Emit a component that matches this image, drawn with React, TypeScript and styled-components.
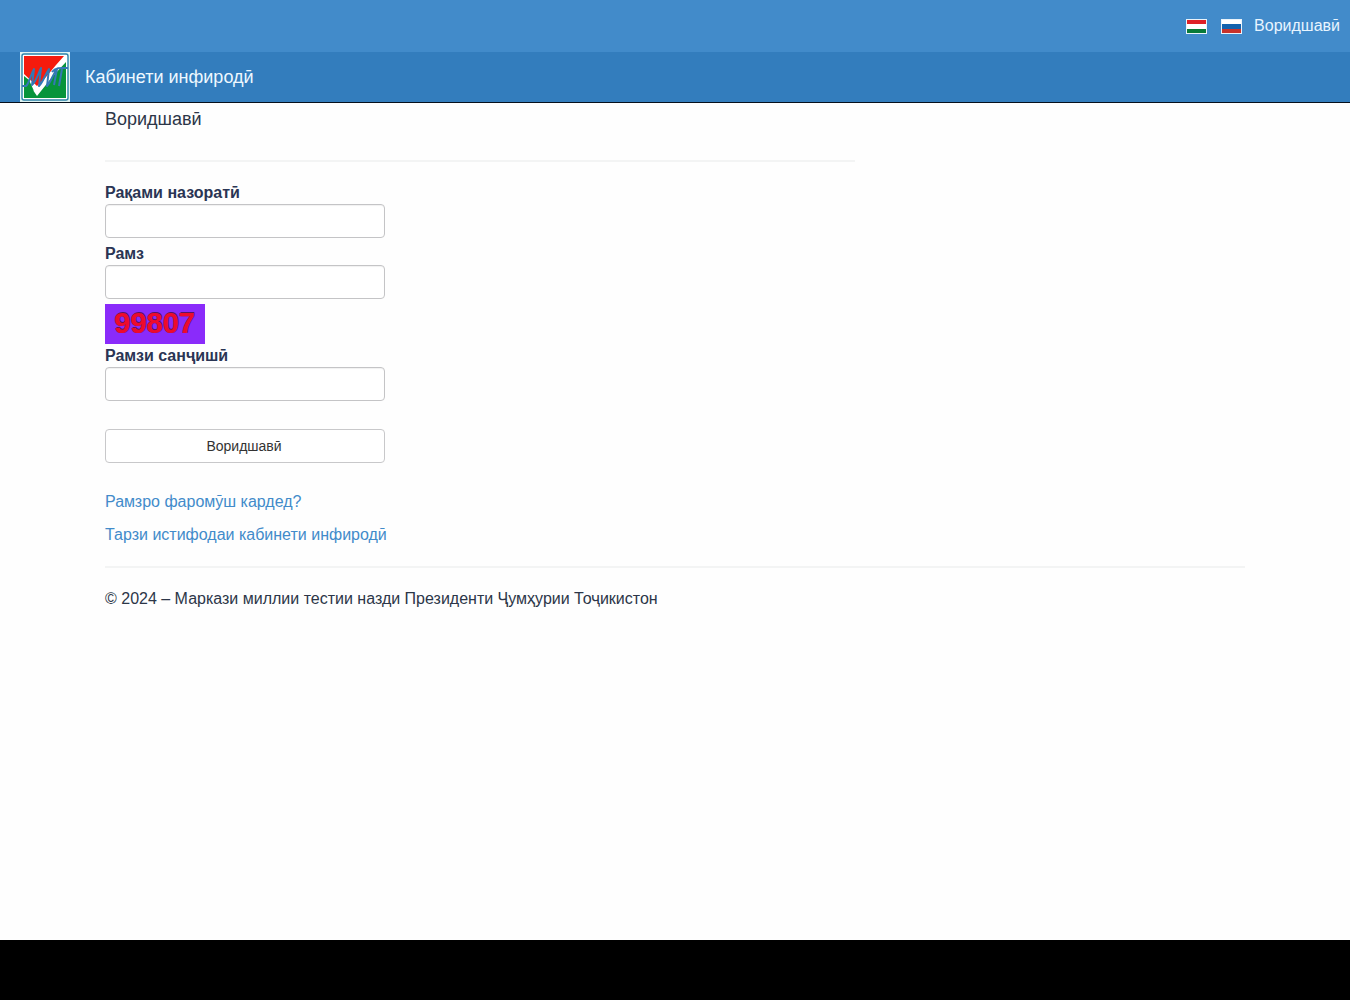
import React from "react";
import styled, { createGlobalStyle } from "styled-components";

const GlobalStyle = createGlobalStyle`
  *, *::before, *::after { box-sizing: border-box; }
  body {
    margin: 0;
    background: #fefefe;
    color: #2c3648;
    font-family: "Liberation Sans", Arial, sans-serif;
    font-size: 16px;
    line-height: 22px;
  }
`;

const Page = styled.div`
  min-height: 100vh;
  display: flex;
  flex-direction: column;
`;

const TopBar = styled.div`
  height: 52px;
  padding: 0 10px;
  display: flex;
  align-items: center;
  justify-content: flex-end;
  gap: 12px;
  background: #428bca;
`;

const Languages = styled.div`
  display: flex;
  gap: 14px;
`;

const FlagButton = styled.button`
  display: flex;
  width: 21px;
  height: 15px;
  padding: 0;
  border: 0;
  background: none;
  cursor: pointer;
`;

const TopLink = styled.a`
  color: #e8f5ff;
  text-decoration: none;
`;

const NavBar = styled.nav`
  height: 51px;
  padding: 0 20px;
  display: flex;
  align-items: center;
  gap: 15px;
  background: #337dbd;
  border-bottom: 1px solid #06101c;
`;

const Brand = styled.a`
  color: #eef8ff;
  font-size: 18px;
  text-decoration: none;
`;

const LogoLink = styled.a`
  display: flex;
`;

const Container = styled.div`
  width: 100%;
  max-width: 1140px;
  margin: 0 auto;
  flex: 1;
`;

const LoginSection = styled.main`
  max-width: 750px;
`;

const Title = styled.h1`
  margin: 4px 0 0;
  font-size: 18px;
  font-weight: 400;
  line-height: 24px;
`;

const Rule = styled.hr<{ $top: number }>`
  height: 2px;
  margin: ${(p) => p.$top}px 0 20px;
  border: 0;
  background: #f3f4f4;
`;

const Form = styled.form`
  width: 280px;
  display: flex;
  flex-direction: column;
`;

const Field = styled.div`
  display: flex;
  flex-direction: column;
  margin-bottom: 5px;
`;

const Label = styled.label`
  color: #2a3554;
  font-weight: 700;
`;

const Input = styled.input`
  width: 100%;
  height: 34px;
  padding: 6px 12px;
  border: 1px solid #c4c4c6;
  border-radius: 4px;
  background: #fff;
  box-shadow: inset 0 1px 1px rgba(0, 0, 0, 0.06);
  color: #555;
  font: inherit;
`;

const Captcha = styled.div`
  width: 100px;
  height: 40px;
  margin-bottom: 1px;
  padding: 3px 0 0 9px;
  background: #8a2bfa;
  color: #ee0a2c;
  font-size: 29px;
  font-weight: 700;
  line-height: 32px;
  text-shadow: 1px 0 0 #5a1260, 1px -1px 0 #5a1260;
`;

const SubmitButton = styled.button`
  height: 34px;
  margin-top: 23px;
  padding: 0 14px 0 12px;
  border: 1px solid #c8c8ca;
  border-radius: 4px;
  background: #fff;
  color: #333;
  font-family: inherit;
  font-size: 14px;
  cursor: pointer;
`;

const Links = styled.div`
  margin-top: 28px;
  display: flex;
  flex-direction: column;
  align-items: flex-start;
  gap: 11px;
`;

const TextLink = styled.a`
  color: #428bca;
  text-decoration: none;
`;

const Copyright = styled.footer`
  margin-bottom: 20px;
`;

const BottomBand = styled.div`
  height: 60px;
  background: #000;
`;

const Flag = ({ colors }: { colors: string[] }) => (
  <svg width="21" height="15" viewBox="0 0 21 15" aria-hidden="true">
    <rect width="21" height="15" fill="#eaf3fa" />
    {colors.map((c, i) => (
      <rect key={i} x="1" y={[1, 5, 10][i]} width="19" height={[4, 5, 4][i]} fill={c} />
    ))}
  </svg>
);

const Logo = () => (
  <svg width="50" height="50" viewBox="0 0 50 50" aria-hidden="true">
    <rect width="50" height="50" fill="#dff4f3" />
    <rect x="2" y="2" width="46" height="46" rx="2" fill="#fff" stroke="#2c83a8" strokeWidth="1.4" />
    <rect x="4" y="4" width="42" height="42" fill="#07943b" />
    <path d="M4 4H46V10L33 24L17 44L4 25Z" fill="#fff" />
    <path d="M4 4H44L36 13L26 25L17 34L4 22Z" fill="#f51b0d" />
    <path d="M4 24L9 28L14 39L4 32Z" fill="#07943b" />
    <path
      d="M2 34H6C9 32 10 24 14 17L12 33C16 30 18 22 21 16L19 34C23 30 25 23 29 17L27 34C31 30 33 22 37 17L34 33M32 20C36 15 42 16 48 16M42 17L39 34"
      fill="none"
      stroke="#3478b4"
      strokeWidth="2"
      strokeLinejoin="round"
    />
  </svg>
);

export default function App() {
  return (
    <>
      <GlobalStyle />
      <Page>
        <header>
          <TopBar>
            <Languages>
              <FlagButton type="button" aria-label="Тоҷикӣ">
                <Flag colors={["#df2027", "#ffffff", "#087a38"]} />
              </FlagButton>
              <FlagButton type="button" aria-label="Русский">
                <Flag colors={["#ffffff", "#1262ad", "#c7322b"]} />
              </FlagButton>
            </Languages>
            <TopLink href="#login">Воридшавӣ</TopLink>
          </TopBar>
          <NavBar>
            <LogoLink href="#home" aria-label="ММТ">
              <Logo />
            </LogoLink>
            <Brand href="#home">Кабинети инфиродӣ</Brand>
          </NavBar>
        </header>
        <Container>
          <LoginSection id="login">
            <Title>Воридшавӣ</Title>
            <Rule $top={29} />
            <Form onSubmit={(e) => e.preventDefault()}>
              <Field>
                <Label htmlFor="number">Рақами назоратӣ</Label>
                <Input id="number" type="text" />
              </Field>
              <Field>
                <Label htmlFor="password">Рамз</Label>
                <Input id="password" type="password" />
              </Field>
              <Captcha>99807</Captcha>
              <Field>
                <Label htmlFor="code">Рамзи санҷишӣ</Label>
                <Input id="code" type="text" />
              </Field>
              <SubmitButton type="submit">Воридшавӣ</SubmitButton>
            </Form>
            <Links>
              <TextLink href="#forgot">Рамзро фаромӯш кардед?</TextLink>
              <TextLink href="#guide">Тарзи истифодаи кабинети инфиродӣ</TextLink>
            </Links>
          </LoginSection>
          <Rule $top={20} />
          <Copyright>© 2024 – Маркази миллии тестии назди Президенти Ҷумҳурии Тоҷикистон</Copyright>
        </Container>
        <BottomBand />
      </Page>
    </>
  );
}
